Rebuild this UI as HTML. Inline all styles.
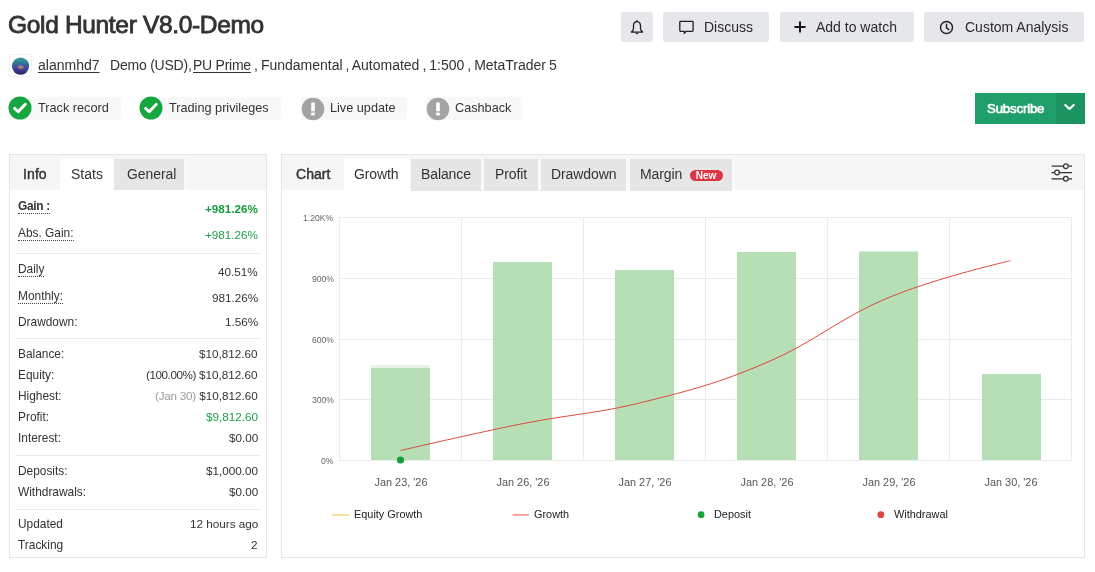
<!DOCTYPE html>
<html><head><meta charset="utf-8"><title>Gold Hunter V8.0-Demo</title>
<style>
html,body{margin:0;padding:0;background:#fff;}
body{width:1095px;height:572px;position:relative;overflow:hidden;font-family:"Liberation Sans", sans-serif;}
.t{position:absolute;white-space:nowrap;will-change:transform;}
.b{position:absolute;}
u{text-decoration:underline;text-underline-offset:2px;text-decoration-thickness:1px;}
</style></head><body>
<div class="t" style="top:11.00px;font-size:24.5px;line-height:27px;color:#333;font-weight:normal;letter-spacing:-0.33px;left:8.3px;-webkit-text-stroke:0.85px #333;">Gold Hunter V8.0-Demo</div>
<div class="b" style="left:621px;top:11.8px;width:32px;height:30.7px;background:#e5e7eb;border-radius:2.5px;"></div>
<div class="b" style="left:663.2px;top:11.8px;width:105.5px;height:30.7px;background:#e5e7eb;border-radius:2.5px;"></div>
<div class="b" style="left:779.5px;top:11.8px;width:134.5px;height:30.7px;background:#e5e7eb;border-radius:2.5px;"></div>
<div class="b" style="left:924.3px;top:11.8px;width:159.5px;height:30.7px;background:#e5e7eb;border-radius:2.5px;"></div>
<svg class="b" style="left:629px;top:19px" width="16" height="17" viewBox="0 0 16 17">
<path d="M8 2.6 C5.6 2.6 4.5 4.6 4.5 7 L4.5 9.6 C4.5 11.1 3.6 12.1 2.4 13.1 L13.6 13.1 C12.4 12.1 11.5 11.1 11.5 9.6 L11.5 7 C11.5 4.6 10.4 2.6 8 2.6 Z" fill="none" stroke="#222" stroke-width="1.3" stroke-linejoin="round"/>
<path d="M8 1.6 V2.6" stroke="#222" stroke-width="1.3" stroke-linecap="round"/>
<path d="M6.8 14.4 Q8 15.6 9.2 14.4 Z" fill="#222" stroke="#222" stroke-width="0.7"/>
</svg>
<div class="t" style="top:19.00px;font-size:14px;line-height:16px;color:#2a2a2a;font-weight:normal;left:703.5px;">Discuss</div>
<svg class="b" style="left:678px;top:19px" width="17" height="17" viewBox="0 0 17 17">
<path d="M2.5 2.4 H14.4 Q15.1 2.4 15.1 3.1 V11.6 Q15.1 12.3 14.4 12.3 H8.2 L6.3 14.4 L6.3 12.3 H2.5 Q1.8 12.3 1.8 11.6 V3.1 Q1.8 2.4 2.5 2.4 Z" fill="none" stroke="#222" stroke-width="1.3" stroke-linejoin="round"/>
</svg>
<div class="t" style="top:19.00px;font-size:14px;line-height:16px;color:#2a2a2a;font-weight:normal;left:816px;">Add to watch</div>
<svg class="b" style="left:793.3px;top:20px" width="14" height="14" viewBox="0 0 14 14">
<path d="M7 1.4 V12.6 M1.4 7 H12.6" stroke="#1a1a1a" stroke-width="2"/>
</svg>
<div class="t" style="top:19.00px;font-size:14px;line-height:16px;color:#2a2a2a;font-weight:normal;left:964.5px;">Custom Analysis</div>
<svg class="b" style="left:938.4px;top:19px" width="17" height="17" viewBox="0 0 17 17">
<circle cx="8.5" cy="8.5" r="6.0" fill="none" stroke="#222" stroke-width="1.5"/>
<path d="M8.5 5.3 V8.9 L10.9 10.6" fill="none" stroke="#222" stroke-width="1.5" stroke-linecap="round" stroke-linejoin="round"/>
</svg>
<div class="b" style="left:9px;top:54px;width:23px;height:23px;background:#fff;border:1px solid #f0f0f0;border-radius:3px;box-sizing:border-box;"></div>
<svg class="b" style="left:10px;top:55px" width="22" height="22" viewBox="0 0 22 22">
<defs>
<linearGradient id="avg" x1="0" y1="0" x2="0" y2="1">
<stop offset="0" stop-color="#3a9a9a"/><stop offset="0.3" stop-color="#2f7f96"/><stop offset="0.5" stop-color="#3b55a8"/><stop offset="0.75" stop-color="#3a3a8c"/><stop offset="1" stop-color="#23225a"/></linearGradient>
<radialGradient id="avo" cx="0.5" cy="0.5" r="0.5"><stop offset="0" stop-color="#e8905a"/><stop offset="0.6" stop-color="#c07a70" stop-opacity="0.7"/><stop offset="1" stop-color="#8a6aa0" stop-opacity="0"/></radialGradient>
</defs>
<circle cx="10.55" cy="11.05" r="8.6" fill="url(#avg)"/>
<ellipse cx="10.8" cy="12.2" rx="4" ry="2.6" fill="url(#avo)"/>
</svg>
<div class="t" style="top:57.00px;font-size:14px;line-height:16px;color:#333;font-weight:normal;left:37.6px;"><u>alanmhd7</u></div>
<div class="t" style="top:57.00px;font-size:14px;line-height:16px;color:#333;font-weight:normal;letter-spacing:-0.22px;left:109.6px;">Demo (USD),</div>
<div class="t" style="top:57.00px;font-size:14px;line-height:16px;color:#333;font-weight:normal;letter-spacing:-0.25px;left:192.8px;"><u>PU Prime</u></div>
<div class="t" style="top:57.00px;font-size:14px;line-height:16px;color:#333;font-weight:normal;left:254px;word-spacing:-0.9px;">, Fundamental , Automated , 1:500 , MetaTrader 5</div>
<div class="b" style="left:9px;top:97px;width:111.5px;height:23px;background:#f8f8f8;border-radius:2px;"></div>
<svg class="b" style="left:7.9px;top:95.8px" width="24" height="24" viewBox="0 0 24 24">
<circle cx="12" cy="12" r="11.5" fill="#16a63f"/>
<path d="M6.6 12.4 L10.2 15.8 L17.3 8.3" fill="none" stroke="#fff" stroke-width="2.9" stroke-linecap="round" stroke-linejoin="round"/>
</svg>
<div class="t" style="top:101.00px;font-size:12.7px;line-height:14px;color:#333;font-weight:normal;left:38.2px;">Track record</div>
<div class="b" style="left:140px;top:97px;width:141px;height:23px;background:#f8f8f8;border-radius:2px;"></div>
<svg class="b" style="left:138.9px;top:95.8px" width="24" height="24" viewBox="0 0 24 24">
<circle cx="12" cy="12" r="11.5" fill="#16a63f"/>
<path d="M6.6 12.4 L10.2 15.8 L17.3 8.3" fill="none" stroke="#fff" stroke-width="2.9" stroke-linecap="round" stroke-linejoin="round"/>
</svg>
<div class="t" style="top:101.00px;font-size:12.7px;line-height:14px;color:#333;font-weight:normal;left:169.3px;">Trading privileges</div>
<div class="b" style="left:301px;top:97px;width:105.5px;height:23px;background:#f8f8f8;border-radius:2px;"></div>
<svg class="b" style="left:300.5px;top:96.5px" width="24" height="24" viewBox="0 0 24 24">
<circle cx="12" cy="12" r="11.3" fill="#a3a3a3"/>
<rect x="10.2" y="5.5" width="3.6" height="8.8" fill="#fff"/>
<rect x="10.2" y="15.6" width="3.6" height="2.8" fill="#fff"/>
</svg>
<div class="t" style="top:101.00px;font-size:12.7px;line-height:14px;color:#333;font-weight:normal;left:329.8px;">Live update</div>
<div class="b" style="left:426px;top:97px;width:95.70000000000005px;height:23px;background:#f8f8f8;border-radius:2px;"></div>
<svg class="b" style="left:425.5px;top:96.5px" width="24" height="24" viewBox="0 0 24 24">
<circle cx="12" cy="12" r="11.3" fill="#a3a3a3"/>
<rect x="10.2" y="5.5" width="3.6" height="8.8" fill="#fff"/>
<rect x="10.2" y="15.6" width="3.6" height="2.8" fill="#fff"/>
</svg>
<div class="t" style="top:101.00px;font-size:12.7px;line-height:14px;color:#333;font-weight:normal;left:455.3px;">Cashback</div>
<div class="b" style="left:975px;top:93px;width:110px;height:31px;background:#1f9e69;"></div>
<div class="b" style="left:1055.5px;top:93px;width:29.5px;height:31px;background:#1b9461;"></div>
<div class="t" style="top:101.00px;font-size:13.2px;line-height:15px;color:#fff;font-weight:normal;letter-spacing:-0.15px;left:986.5px;-webkit-text-stroke:0.6px #fff;">Subscribe</div>
<svg class="b" style="left:1063px;top:102px" width="13" height="10" viewBox="0 0 13 10">
<path d="M2.3 3 L6.5 7 L10.7 3" fill="none" stroke="#fff" stroke-width="2.1" stroke-linecap="round" stroke-linejoin="round"/>
</svg>
<div class="b" style="left:9px;top:154px;width:258px;height:404px;background:#fff;border:1px solid #e6e6e6;box-sizing:border-box;"></div>
<div class="b" style="left:10px;top:155px;width:256px;height:35px;background:#f6f6f6;"></div>
<div class="b" style="left:184px;top:159px;width:3.5px;height:31px;background:#fafafa;"></div>
<div class="b" style="left:60px;top:159px;width:54px;height:31px;background:#fff;"></div>
<div class="b" style="left:114px;top:159px;width:70px;height:31px;background:#e6e6e6;"></div>
<div class="t" style="top:166.00px;font-size:14px;line-height:16px;color:#333;font-weight:normal;letter-spacing:0.1px;left:23.3px;-webkit-text-stroke:0.4px #333;">Info</div>
<div class="t" style="top:166.00px;font-size:14px;line-height:16px;color:#333;font-weight:normal;left:71.2px;">Stats</div>
<div class="t" style="top:166.00px;font-size:13.9px;line-height:16px;color:#333;font-weight:normal;left:126.6px;">General</div>
<div class="t" style="top:199.00px;font-size:11.9px;line-height:14px;color:#333;font-weight:normal;left:17.8px;white-space:nowrap;"><span style="border-bottom:1px dotted #444"><b style="letter-spacing:-0.3px">Gain :</b></span></div>
<div class="t" style="top:202.00px;font-size:11.7px;line-height:13px;color:#333;font-weight:normal;right:837.2px;white-space:nowrap;"><b style="color:#169c3c">+981.26%</b></div>
<div class="t" style="top:226.00px;font-size:11.9px;line-height:14px;color:#333;font-weight:normal;left:17.8px;white-space:nowrap;"><span style="border-bottom:1px dotted #444">Abs. Gain:</span></div>
<div class="t" style="top:228.00px;font-size:11.7px;line-height:13px;color:#333;font-weight:normal;right:837.2px;white-space:nowrap;"><span style="color:#1f9e48">+981.26%</span></div>
<div class="t" style="top:262.00px;font-size:11.9px;line-height:14px;color:#333;font-weight:normal;left:17.8px;white-space:nowrap;"><span style="border-bottom:1px dotted #444">Daily</span></div>
<div class="t" style="top:265.00px;font-size:11.7px;line-height:13px;color:#333;font-weight:normal;right:837.2px;white-space:nowrap;">40.51%</div>
<div class="t" style="top:289.00px;font-size:11.9px;line-height:14px;color:#333;font-weight:normal;left:17.8px;white-space:nowrap;"><span style="border-bottom:1px dotted #444">Monthly:</span></div>
<div class="t" style="top:291.00px;font-size:11.7px;line-height:13px;color:#333;font-weight:normal;right:837.2px;white-space:nowrap;">981.26%</div>
<div class="t" style="top:315.00px;font-size:11.9px;line-height:14px;color:#333;font-weight:normal;left:17.8px;white-space:nowrap;">Drawdown:</div>
<div class="t" style="top:315.00px;font-size:11.7px;line-height:13px;color:#333;font-weight:normal;right:837.2px;white-space:nowrap;">1.56%</div>
<div class="t" style="top:347.00px;font-size:11.9px;line-height:14px;color:#333;font-weight:normal;left:17.8px;white-space:nowrap;">Balance:</div>
<div class="t" style="top:347.00px;font-size:11.7px;line-height:13px;color:#333;font-weight:normal;right:837.2px;white-space:nowrap;">$10,812.60</div>
<div class="t" style="top:368.00px;font-size:11.9px;line-height:14px;color:#333;font-weight:normal;left:17.8px;white-space:nowrap;">Equity:</div>
<div class="t" style="top:368.00px;font-size:11.7px;line-height:13px;color:#333;font-weight:normal;right:837.2px;white-space:nowrap;"><span style="letter-spacing:-0.45px">(100.00%)</span> $10,812.60</div>
<div class="t" style="top:389.00px;font-size:11.9px;line-height:14px;color:#333;font-weight:normal;left:17.8px;white-space:nowrap;">Highest:</div>
<div class="t" style="top:389.00px;font-size:11.7px;line-height:13px;color:#333;font-weight:normal;right:837.2px;white-space:nowrap;"><span style="color:#9a9a9a;letter-spacing:-0.25px">(Jan 30)</span> $10,812.60</div>
<div class="t" style="top:410.00px;font-size:11.9px;line-height:14px;color:#333;font-weight:normal;left:17.8px;white-space:nowrap;">Profit:</div>
<div class="t" style="top:410.00px;font-size:11.7px;line-height:13px;color:#333;font-weight:normal;right:837.2px;white-space:nowrap;"><span style="color:#1f9e48">$9,812.60</span></div>
<div class="t" style="top:431.00px;font-size:11.9px;line-height:14px;color:#333;font-weight:normal;left:17.8px;white-space:nowrap;">Interest:</div>
<div class="t" style="top:431.00px;font-size:11.7px;line-height:13px;color:#333;font-weight:normal;right:837.2px;white-space:nowrap;">$0.00</div>
<div class="t" style="top:464.00px;font-size:11.9px;line-height:14px;color:#333;font-weight:normal;left:17.8px;white-space:nowrap;">Deposits:</div>
<div class="t" style="top:464.00px;font-size:11.7px;line-height:13px;color:#333;font-weight:normal;right:837.2px;white-space:nowrap;">$1,000.00</div>
<div class="t" style="top:485.00px;font-size:11.9px;line-height:14px;color:#333;font-weight:normal;left:17.8px;white-space:nowrap;">Withdrawals:</div>
<div class="t" style="top:485.00px;font-size:11.7px;line-height:13px;color:#333;font-weight:normal;right:837.2px;white-space:nowrap;">$0.00</div>
<div class="t" style="top:517.00px;font-size:11.9px;line-height:14px;color:#333;font-weight:normal;left:17.8px;white-space:nowrap;">Updated</div>
<div class="t" style="top:517.00px;font-size:11.7px;line-height:13px;color:#333;font-weight:normal;right:837.2px;white-space:nowrap;">12 hours ago</div>
<div class="t" style="top:538.00px;font-size:11.9px;line-height:14px;color:#333;font-weight:normal;left:17.8px;white-space:nowrap;">Tracking</div>
<div class="t" style="top:538.00px;font-size:11.7px;line-height:13px;color:#333;font-weight:normal;right:837.2px;white-space:nowrap;">2</div>
<div class="b" style="left:16px;top:253px;width:245px;height:1px;background:#ebebeb;"></div>
<div class="b" style="left:16px;top:338px;width:245px;height:1px;background:#ebebeb;"></div>
<div class="b" style="left:16px;top:454.7px;width:245px;height:1.0px;background:#ebebeb;"></div>
<div class="b" style="left:16px;top:508.5px;width:245px;height:1.0px;background:#ebebeb;"></div>
<div class="b" style="left:281px;top:154px;width:804px;height:404px;background:#fff;border:1px solid #e6e6e6;box-sizing:border-box;"></div>
<div class="b" style="left:282px;top:155px;width:802px;height:35px;background:#f6f6f6;"></div>
<div class="t" style="top:166.00px;font-size:14px;line-height:16px;color:#333;font-weight:normal;letter-spacing:0.05px;left:296.3px;-webkit-text-stroke:0.45px #333;">Chart</div>
<div class="b" style="left:344px;top:159px;width:66px;height:32px;background:#fff;"></div>
<div class="t" style="top:166.00px;font-size:14px;line-height:16px;color:#333;font-weight:normal;letter-spacing:-0.1px;left:353.8px;">Growth</div>
<div class="b" style="left:411px;top:159px;width:69.5px;height:32px;background:#e6e6e6;"></div>
<div class="b" style="left:480.5px;top:159px;width:3.5px;height:32px;background:#fafafa;"></div>
<div class="t" style="top:166.00px;font-size:14px;line-height:16px;color:#333;font-weight:normal;letter-spacing:-0.1px;left:421.1px;">Balance</div>
<div class="b" style="left:483.6px;top:159px;width:54.10000000000002px;height:32px;background:#e6e6e6;"></div>
<div class="b" style="left:537.7px;top:159px;width:3.5px;height:32px;background:#fafafa;"></div>
<div class="t" style="top:166.00px;font-size:14px;line-height:16px;color:#333;font-weight:normal;letter-spacing:-0.1px;left:494.5px;">Profit</div>
<div class="b" style="left:541.3px;top:159px;width:85.20000000000005px;height:32px;background:#e6e6e6;"></div>
<div class="b" style="left:626.5px;top:159px;width:3.5px;height:32px;background:#fafafa;"></div>
<div class="t" style="top:166.00px;font-size:14px;line-height:16px;color:#333;font-weight:normal;letter-spacing:-0.1px;left:551.0px;">Drawdown</div>
<div class="b" style="left:630px;top:159px;width:101.70000000000005px;height:32px;background:#e6e6e6;"></div>
<div class="b" style="left:731.7px;top:159px;width:3.5px;height:32px;background:#fafafa;"></div>
<div class="t" style="top:166.00px;font-size:14px;line-height:16px;color:#333;font-weight:normal;letter-spacing:-0.1px;left:640.0999999999999px;">Margin</div>
<div class="b" style="left:690px;top:170px;width:32.5px;height:11px;background:#dc3545;border-radius:6px;"></div>
<div class="t" style="top:170.00px;font-size:10px;line-height:11px;color:#fff;font-weight:bold;left:406.20000000000005px;width:600px;text-align:center;">New</div>
<svg class="b" style="left:1050px;top:162px" width="24" height="20" viewBox="0 0 24 20">
<g stroke="#333" stroke-width="1.25" fill="none">
<path d="M1.6 4.2 H13.4 M18.3 4.2 H22 M1.6 10.5 H4.6 M9.5 10.5 H22 M1.6 16.8 H13.4 M18.3 16.8 H22"/>
<circle cx="15.85" cy="4.2" r="2.35" fill="#fff"/>
<circle cx="7.05" cy="10.5" r="2.35" fill="#fff"/>
<circle cx="15.85" cy="16.8" r="2.35" fill="#fff"/>
</g></svg>
<svg class="b" style="left:0;top:0" width="1095" height="572" viewBox="0 0 1095 572">
<line x1="339" x2="1072" y1="217.5" y2="217.5" stroke="#ebebeb" stroke-width="1"/>
<line x1="339" x2="1072" y1="278.5" y2="278.5" stroke="#ebebeb" stroke-width="1"/>
<line x1="339" x2="1072" y1="339.5" y2="339.5" stroke="#ebebeb" stroke-width="1"/>
<line x1="339" x2="1072" y1="399.5" y2="399.5" stroke="#ebebeb" stroke-width="1"/>
<line x1="339" x2="1072" y1="460.5" y2="460.5" stroke="#ebebeb" stroke-width="1"/>
<line x1="339.5" x2="339.5" y1="217" y2="461" stroke="#ebebeb" stroke-width="1"/>
<line x1="461.5" x2="461.5" y1="217" y2="461" stroke="#ebebeb" stroke-width="1"/>
<line x1="583.5" x2="583.5" y1="217" y2="461" stroke="#ebebeb" stroke-width="1"/>
<line x1="705.5" x2="705.5" y1="217" y2="461" stroke="#ebebeb" stroke-width="1"/>
<line x1="827.5" x2="827.5" y1="217" y2="461" stroke="#ebebeb" stroke-width="1"/>
<line x1="949.5" x2="949.5" y1="217" y2="461" stroke="#ebebeb" stroke-width="1"/>
<line x1="1071.5" x2="1071.5" y1="217" y2="461" stroke="#ebebeb" stroke-width="1"/>
<rect x="371" y="368" width="59" height="92" fill="#b6dfb6"/>
<rect x="371" y="365" width="59" height="3" fill="#b6dfb6" opacity="0.35"/>
<rect x="493" y="262" width="59" height="198" fill="#b6dfb6"/>
<rect x="615" y="270" width="59" height="190" fill="#b6dfb6"/>
<rect x="737" y="252" width="59" height="208" fill="#b6dfb6"/>
<rect x="859" y="251.5" width="59" height="208.5" fill="#b6dfb6"/>
<rect x="982" y="374" width="59" height="86" fill="#b6dfb6"/>
<path d="M 400.5 450.5 C 400.50 450.50 473.40 433.50 522 423.8 C 570.80 414.06 595.20 414.10 644 401.9 C 692.80 389.70 717.20 383.60 766 362.8 C 814.80 342.00 839.20 318.28 888 297.9 C 937.00 277.44 1010.50 260.70 1010.5 260.7" fill="none" stroke="#dc4a3c" stroke-width="1"/>
<circle cx="400.5" cy="460" r="3.6" fill="#13a03b"/>
<line x1="332" x2="349" y1="514.9" y2="514.9" stroke="#fddb9a" stroke-width="2"/>
<line x1="512.5" x2="529" y1="514.9" y2="514.9" stroke="#f5a39e" stroke-width="2"/>
<circle cx="701.1" cy="514.7" r="3.4" fill="#16a33c"/>
<circle cx="880.8" cy="514.7" r="3.4" fill="#e04646"/>
</svg>
<div class="t" style="top:213.00px;font-size:8.6px;line-height:10px;color:#666;font-weight:normal;right:761.5px;">1.20K%</div>
<div class="t" style="top:274.00px;font-size:8.6px;line-height:10px;color:#666;font-weight:normal;right:761.5px;">900%</div>
<div class="t" style="top:335.00px;font-size:8.6px;line-height:10px;color:#666;font-weight:normal;right:761.5px;">600%</div>
<div class="t" style="top:395.00px;font-size:8.6px;line-height:10px;color:#666;font-weight:normal;right:761.5px;">300%</div>
<div class="t" style="top:456.00px;font-size:8.6px;line-height:10px;color:#666;font-weight:normal;right:761.5px;">0%</div>
<div class="t" style="top:476.00px;font-size:10.9px;line-height:12px;color:#555;font-weight:normal;left:100.5px;width:600px;text-align:center;">Jan 23, '26</div>
<div class="t" style="top:476.00px;font-size:10.9px;line-height:12px;color:#555;font-weight:normal;left:222.5px;width:600px;text-align:center;">Jan 26, '26</div>
<div class="t" style="top:476.00px;font-size:10.9px;line-height:12px;color:#555;font-weight:normal;left:344.5px;width:600px;text-align:center;">Jan 27, '26</div>
<div class="t" style="top:476.00px;font-size:10.9px;line-height:12px;color:#555;font-weight:normal;left:466.5px;width:600px;text-align:center;">Jan 28, '26</div>
<div class="t" style="top:476.00px;font-size:10.9px;line-height:12px;color:#555;font-weight:normal;left:588.5px;width:600px;text-align:center;">Jan 29, '26</div>
<div class="t" style="top:476.00px;font-size:10.9px;line-height:12px;color:#555;font-weight:normal;left:710.5px;width:600px;text-align:center;">Jan 30, '26</div>
<div class="t" style="top:508.00px;font-size:10.9px;line-height:12px;color:#222;font-weight:normal;left:354px;">Equity Growth</div>
<div class="t" style="top:508.00px;font-size:10.9px;line-height:12px;color:#222;font-weight:normal;left:534px;">Growth</div>
<div class="t" style="top:508.00px;font-size:10.9px;line-height:12px;color:#222;font-weight:normal;left:714px;">Deposit</div>
<div class="t" style="top:508.00px;font-size:10.9px;line-height:12px;color:#222;font-weight:normal;left:894px;">Withdrawal</div>

</body></html>
